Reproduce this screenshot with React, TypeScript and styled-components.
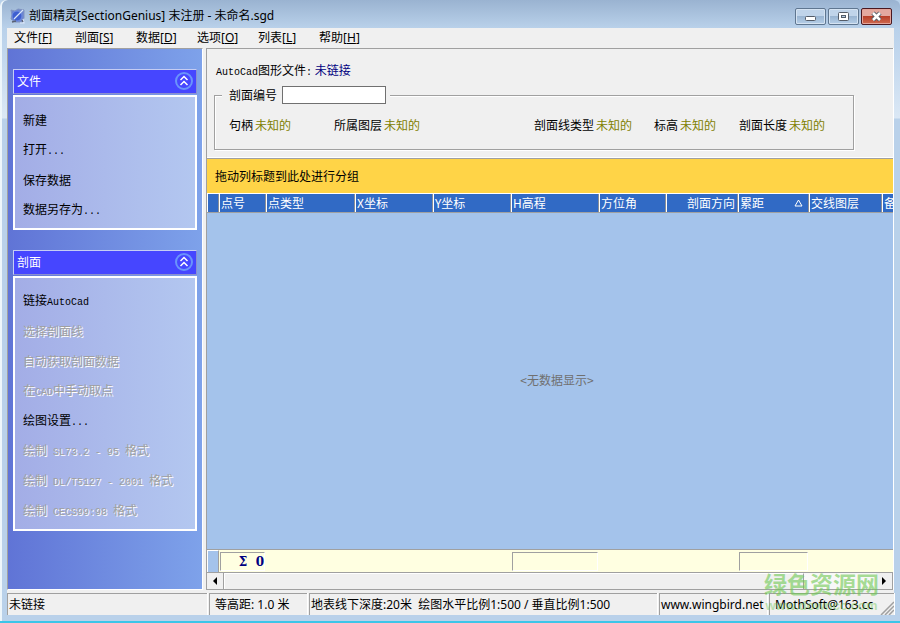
import React, { useState } from "react";
import styled, { createGlobalStyle } from "styled-components";

const ui = `"Noto Sans", "Noto Sans CJK SC", sans-serif`;
const song = `"Noto Sans CJK SC", sans-serif`;
const gray = "#a0a0a0";

const Global = createGlobalStyle`
  * { box-sizing: border-box; }
  body { margin: 0; background: #b9d1ea; color: #000; font: 12px/16px ${song}; }
  button, input { font: inherit; color: inherit; border-radius: 0; margin: 0; }
  button { padding: 0; border: 0; background: none; }
`;

const Window = styled.div`
  display: flex;
  flex-direction: column;
  height: 100vh;
  padding: 0 6px 6px 7px;
  border-bottom: 2px solid #3cc5e8;
  box-shadow: inset 2px 0 #eef6fb;
  border-top-left-radius: 6px;
  border-top-right-radius: 6px;
  background: linear-gradient(#9ab3d1 0, #b9d1ea 28px, #c3d8ee 60px, #dbe8f5 118px, #b9d1ea 119px);
  overflow: hidden;
  position: relative;
`;

const TitleBar = styled.header`
  display: flex;
  flex: none;
  align-items: center;
  gap: 4px;
  height: 28px;
  padding: 4px 2px 0 3px;
  font-family: ${ui};
`;

const Title = styled.h1`
  flex: 1;
  margin: 0;
  font-size: 12px;
  font-weight: 400;
  white-space: nowrap;
`;

const Controls = styled.div`
  display: flex;
  gap: 2px;
`;

const Control = styled.button<{ $danger?: boolean }>`
  display: grid;
  place-items: center;
  width: 31px;
  height: 17px;
  border: 1px solid ${(p) => (p.$danger ? "#4a1820" : "#5f7690")};
  border-radius: 2px;
  box-shadow: inset 0 0 0 1px ${(p) => (p.$danger ? "#e3a399" : "#d5e3f2")};
  background: ${(p) =>
    p.$danger
      ? "linear-gradient(#e3a89f 0 45%, #b8402a 50%, #cf6a50)"
      : "linear-gradient(#c0d4ea 0 45%, #9ab5d2 50%, #b6cfe8)"};
`;

const MenuBar = styled.nav`
  display: grid;
  flex: none;
  grid-auto-flow: column;
  grid-auto-columns: 61px;
  height: 20px;
  background: #f0f0f0;
  font-family: ${ui};
`;

const MenuItem = styled.button`
  padding-left: 7px;
  text-align: left;
  white-space: nowrap;
`;

const Body = styled.div`
  display: flex;
  flex: 1;
  gap: 3px;
  min-height: 0;
  background: #f0f0f0;
  border-right: 1px solid #fff;
`;

const Sidebar = styled.aside`
  flex: none;
  width: 196px;
  padding: 20px 5px 0;
  border: 1px solid ${gray};
  border-right-color: #fff;
  border-bottom-color: #fff;
  background: linear-gradient(90deg, #6074d6, #7ea2ea);
`;

const Panel = styled.section`
  margin-bottom: 20px;
`;

const PanelHeader = styled.button`
  display: flex;
  align-items: center;
  justify-content: space-between;
  width: 100%;
  height: 25px;
  padding: 0 2px 2px 3px;
  border: 1px solid #c5cdf4;
  border-right-color: #8a8fd0;
  border-bottom-color: #8a8fd0;
  background: #4646ff;
  color: #fff;
`;

const PanelBody = styled.div`
  display: flex;
  flex-direction: column;
  margin-top: 1px;
  padding: 8px 8px 3px;
  border: 2px solid #fff;
  background: linear-gradient(90deg, #a3ade6, #b3c7f0);
`;

const Action = styled.button`
  height: 30px;
  text-align: left;
  white-space: nowrap;
  &:disabled {
    color: #a0a0a0;
    text-shadow: 1px 1px #fff;
  }
`;

const Mono = styled.span`
  font-family: "Liberation Mono", monospace;
  font-size: 10px;
`;

const Content = styled.main`
  display: flex;
  flex: 1;
  flex-direction: column;
  min-width: 0;
  border: 1px solid ${gray};
  border-right: 0;
`;

const Info = styled.div`
  flex: none;
  padding: 13px 39px 7px 7px;
  border-bottom: 1px solid #fff;
`;

const FileLine = styled.p`
  margin: 0;
  padding-left: 2px;
  white-space: pre;
`;

const Linked = styled.output`
  color: #000080;
`;

const Section = styled.fieldset`
  min-width: 0;
  margin: 5px 0 0;
  padding: 13px 0 16px 14px;
  border: 1px solid ${gray};
  box-shadow: 1px 1px #fff, inset 1px 1px #fff;
`;

const Legend = styled.legend`
  display: flex;
  align-items: center;
  gap: 5px;
  margin-left: -7px;
  padding: 0 4px 0 7px;
  background: #f0f0f0;
`;

const NumberInput = styled.input`
  width: 104px;
  height: 18px;
  padding: 0 2px;
  border: 1px solid #707070;
  background: #fff;
`;

const Fields = styled.div`
  display: grid;
  grid-template-columns: 105px 200px 120px 85px auto;
`;

const Field = styled.div`
  display: flex;
  gap: 2px;
  white-space: nowrap;
`;

const Unknown = styled.output`
  color: #808000;
`;

const GroupBar = styled.div`
  flex: none;
  padding: 9px 8px;
  border-top: 1px solid ${gray};
  background: #ffd447;
`;

const Grid = styled.table`
  display: flex;
  flex: 1;
  flex-direction: column;
  min-height: 0;
  overflow: hidden;
  background: #a4c3eb;
`;

const Head = styled.thead`
  display: block;
  border-top: 1px solid #fff;
  border-bottom: 1px solid ${gray};
`;

const columns = "12px 47px 89px 78px 78px 88px 67px 72px 71px 73px minmax(12px, 1fr)";

const Row = styled.tr`
  display: grid;
  grid-template-columns: ${columns};
`;

const Th = styled.th<{ $right?: boolean }>`
  display: flex;
  align-items: center;
  justify-content: ${(p) => (p.$right ? "flex-end" : "space-between")};
  height: 18px;
  padding: 0 ${(p) => (p.$right ? 2 : 5)}px 0 1px;
  border-right: 1px solid #8a8f98;
  border-left: 1px solid #fff;
  background: #316ac5;
  color: #fff;
  font-weight: 400;
  overflow: hidden;
  white-space: nowrap;
`;

const Rows = styled.tbody`
  display: flex;
  flex: 1;
`;

const EmptyRow = styled.tr`
  display: flex;
  flex: 1;
`;

const Empty = styled.td`
  display: grid;
  flex: 1;
  place-items: center;
  padding: 0 0 2px 14px;
  color: #707070;
`;

const Foot = styled.tfoot`
  display: block;
  border-top: 1px solid ${gray};
  background: #ffffe1;
`;

const Td = styled.td<{ $kind?: "mark" | "sum" }>`
  height: ${(p) => (p.$kind === "sum" ? 19 : 22)}px;
  margin: ${(p) => (p.$kind === "sum" ? "2px 1px 1px" : "0")};
  padding: 0;
  ${(p) => p.$kind === "sum" && `border: 1px solid ${gray}; border-right-color: #fff; border-bottom-color: #fff;`}
  ${(p) => p.$kind === "mark" && `background: #a4c3eb; border: solid #fff; border-width: 1px 0 0 1px; border-right: 1px solid ${gray};`}
  color: #000080;
  font: bold 12px/18px "DejaVu Serif", serif;
  text-align: right;
  white-space: pre;
`;

const Scroll = styled.div`
  display: flex;
  flex: none;
  height: 17px;
  border-top: 1px solid ${gray};
  background: #f8f8f8;
`;

const Arrow = styled.button`
  display: grid;
  place-items: center;
  width: 17px;
  background: #f0f0f0;
  border-right: 1px solid ${gray};
`;

const Thumb = styled.div`
  flex: 0 0 89%;
  border: 1px solid #fff;
  border-right-color: ${gray};
  border-bottom: 0;
  background: #f0f0f0;
`;

const Track = styled.div`
  display: flex;
  flex: 1;
`;

const Status = styled.footer`
  display: grid;
  flex: none;
  grid-template-columns: 200px 98px 348px 108px 1fr;
  column-gap: 2px;
  padding-top: 3px;
  background: #f0f0f0;
  font-family: ${ui};
`;

const StatusCell = styled.div<{ $indent?: boolean }>`
  display: flex;
  align-items: center;
  height: 22px;
  padding-left: ${(p) => (p.$indent ? 5 : 1)}px;
  border: solid ${gray};
  border-width: 1px 0 0 1px;
  box-shadow: 1px 0 #fff;
  overflow: hidden;
  white-space: pre;
`;

const Grip = styled.svg`
  margin-left: auto;
  align-self: flex-end;
`;

const Watermark = styled.div`
  position: absolute;
  right: 21px;
  bottom: 7px;
  color: rgba(110, 200, 80, 0.6);
  font: bold 23px/26px ${song};
  text-align: center;
  pointer-events: none;
`;

const WatermarkUrl = styled.div`
  margin-top: 2px;
  font: bold 13px/16px "Liberation Sans", sans-serif;
  opacity: 0.7;
`;

const Mixed = ({ text }: { text: string }) => (
  <span>
    {text.split(/([\x20-\x7e]+)/).map((part, i) => (i % 2 ? <Mono key={i}>{part}</Mono> : part))}
  </span>
);

const Logo = () => (
  <svg width="15" height="16" viewBox="0 0 15 16" aria-hidden="true">
    <path d="M1 2l4 1 3-2 6 1v8l-2 4H5L1 11l1-4z" fill="#6c86cf" stroke="#8194c0" />
    <circle cx="7" cy="8" r="5" fill="#3e5fd0" stroke="#6f8ce0" />
    <path d="M4 11L13 2M10 15h4l-1-4" stroke="#dbe7fb" strokeWidth="1.2" fill="none" />
    <path d="M2 14l4-1M12 12l1 2" stroke="#596173" strokeWidth="1.3" />
  </svg>
);

const Chevrons = () => (
  <svg width="20" height="20" viewBox="0 0 20 20" fill="none" aria-hidden="true">
    <circle cx="10" cy="10" r="8" stroke="#6a93fb" strokeWidth="2" />
    <path d="M6.5 9L10 5.5 13.5 9M6.5 14l3.500-3.500 3.500 3.500" stroke="#fff" strokeWidth="1.5" />
  </svg>
);

const panels = [
  { title: "文件", items: [["新建"], ["打开..."], ["保存数据"], ["数据另存为..."]] },
  {
    title: "剖面",
    items: [
      ["链接AutoCad"],
      ["选择剖面线", "off"],
      ["自动获取剖面数据", "off"],
      ["在CAD中手动取点", "off"],
      ["绘图设置..."],
      ["绘制 SL73.2 - 95 格式", "off"],
      ["绘制 DL/T5127 - 2001 格式", "off"],
      ["绘制 CECS99:98 格式", "off"],
    ],
  },
];

const menus = [["文件", "F"], ["剖面", "S"], ["数据", "D"], ["选项", "O"], ["列表", "L"], ["帮助", "H"]];
const fields = ["句柄", "所属图层", "剖面线类型", "标高", "剖面长度"];
const heads = ["", "点号", "点类型", "X坐标", "Y坐标", "H高程", "方位角", "剖面方向", "累距", "交线图层", "备"];

const SidePanel = ({ title, items }: { title: string; items: string[][] }) => {
  const [open, setOpen] = useState(true);
  return (
    <Panel>
      <PanelHeader aria-expanded={open} onClick={() => setOpen(!open)}>
        {title}
        <Chevrons />
      </PanelHeader>
      {open && (
        <PanelBody>
          {items.map(([text, off]) => (
            <Action key={text} disabled={!!off}>
              <Mixed text={text} />
            </Action>
          ))}
        </PanelBody>
      )}
    </Panel>
  );
};

export default function App() {
  return (
    <>
      <Global />
      <Window>
        <TitleBar>
          <Logo />
          <Title>剖面精灵[SectionGenius] 末注册 - 未命名.sgd</Title>
          <Controls>
            <Control aria-label="最小化">
              <svg width="13" height="11" viewBox="0 0 13 11">
                <rect x="1.500" y="5.500" width="10" height="4" rx="1" fill="#fff" stroke="#545c68" />
              </svg>
            </Control>
            <Control aria-label="最大化">
              <svg width="13" height="11" viewBox="0 0 13 11">
                <rect x="1.500" y="1.500" width="10" height="8" rx="1" fill="#fff" stroke="#545c68" />
                <rect x="4.500" y="4.500" width="4" height="2" fill="#b6cfe8" stroke="#545c68" />
              </svg>
            </Control>
            <Control aria-label="关闭" $danger>
              <svg width="13" height="11" viewBox="0 0 13 11">
                <path d="M3 2l7 7M10 2L3 9" stroke="#545c68" strokeWidth="4.500" />
                <path d="M3 2l7 7M10 2L3 9" stroke="#fff" strokeWidth="2.500" />
              </svg>
            </Control>
          </Controls>
        </TitleBar>
        <MenuBar>
          {menus.map(([name, key]) => (
            <MenuItem key={key}>
              {name}[<u>{key}</u>]
            </MenuItem>
          ))}
        </MenuBar>
        <Body>
          <Sidebar>
            {panels.map((p) => (
              <SidePanel key={p.title} {...p} />
            ))}
          </Sidebar>
          <Content>
            <Info>
              <FileLine>
                <Mixed text="AutoCad图形文件:" /> <Linked>未链接</Linked>
              </FileLine>
              <Section>
                <Legend>
                  <label htmlFor="section-no">剖面编号</label>
                  <NumberInput id="section-no" />
                </Legend>
                <Fields>
                  {fields.map((name) => (
                    <Field key={name}>
                      <span>{name}</span>
                      <Unknown>未知的</Unknown>
                    </Field>
                  ))}
                </Fields>
              </Section>
            </Info>
            <GroupBar>拖动列标题到此处进行分组</GroupBar>
            <Grid>
              <Head>
                <Row>
                  {heads.map((name) => (
                    <Th key={name} scope="col" $right={name === "剖面方向"}>
                      {name}
                      {name === "累距" && (
                        <svg width="9" height="8" viewBox="0 0 9 8" aria-hidden="true">
                          <path d="M4.500 1L8 7H1z" fill="none" stroke="#fff" />
                        </svg>
                      )}
                    </Th>
                  ))}
                </Row>
              </Head>
              <Rows>
                <EmptyRow>
                  <Empty>&lt;无数据显示&gt;</Empty>
                </EmptyRow>
              </Rows>
              <Foot>
                <Row>
                  {heads.map((name, i) => (
                    <Td key={name} $kind={i === 0 ? "mark" : [1, 5, 8].includes(i) ? "sum" : undefined}>
                      {i === 1 ? "Σ  0" : ""}
                    </Td>
                  ))}
                </Row>
              </Foot>
            </Grid>
            <Scroll>
              <Arrow aria-label="向左滚动">
                <svg width="4" height="8" viewBox="0 0 4 8"><path d="M4 0v8L0 4z" /></svg>
              </Arrow>
              <Track>
                <Thumb />
              </Track>
              <Arrow aria-label="向右滚动">
                <svg width="4" height="8" viewBox="0 0 4 8"><path d="M0 0v8l4-4z" /></svg>
              </Arrow>
            </Scroll>
          </Content>
        </Body>
        <Status>
          <StatusCell>未链接</StatusCell>
          <StatusCell $indent>等高距: 1.0 米</StatusCell>
          <StatusCell>地表线下深度:20米  绘图水平比例1:500 / 垂直比例1:500</StatusCell>
          <StatusCell>www.wingbird.net</StatusCell>
          <StatusCell $indent>
            MothSoft@163.cc
            <Grip width="14" height="14" viewBox="0 0 14 14" stroke={gray} strokeWidth="1.500" aria-hidden="true">
              <path d="M1 14L14 1M5 14l9-9M9 14l5-5" />
            </Grip>
          </StatusCell>
        </Status>
        <Watermark>
          绿色资源网
          <WatermarkUrl>www.downcc.com</WatermarkUrl>
        </Watermark>
      </Window>
    </>
  );
}
